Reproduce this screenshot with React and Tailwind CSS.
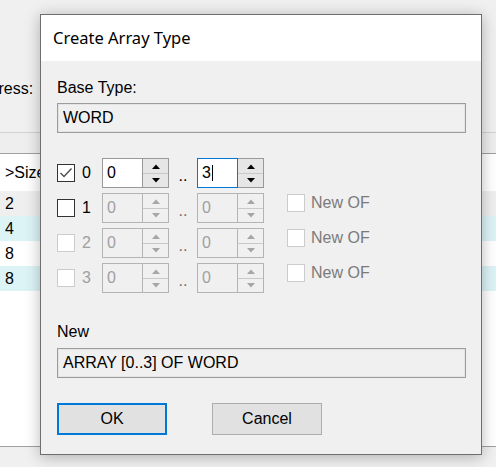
import React from 'react';

const Check = ({ checked, disabled }) => (
  <div
    className={`flex h-[18px] w-[18px] shrink-0 items-center justify-center border bg-white ${
      disabled ? 'border-[#cccccc]' : 'border-[#333333]'
    }`}
  >
    {checked && (
      <svg width="16" height="16" viewBox="0 0 16 16">
        <path d="M2.5 8 L6 11.5 L13.5 3.5" fill="none" stroke="#4d4d4d" strokeWidth="1.4" />
      </svg>
    )}
  </div>
);

const Arrow = ({ up, color }) => (
  <svg width="8" height="5" viewBox="0 0 8 5">
    <polygon points={up ? '0,5 4,0.5 8,5' : '0,0 8,0 4,4.5'} fill={color} />
  </svg>
);

const Spin = ({ value, disabled, focused }) => {
  const arrow = disabled ? '#a6a6a6' : '#000000';
  return (
    <div className="flex h-[30px]">
      <div
        className={`flex w-[41px] items-center border pl-[4px] ${
          focused ? 'border-[#0078d7]' : disabled ? 'border-[#b4b4b4]' : 'border-[#999999]'
        } ${disabled ? 'bg-[#f0f0f0] text-[#a0a0a0]' : 'bg-white'}`}
      >
        {value}
        {focused && <span className="ml-[1px] h-[16px] w-[1px] bg-black" />}
      </div>
      <div
        className={`flex w-[26px] flex-col border border-l-0 ${
          disabled ? 'border-[#b4b4b4] bg-[#f0f0f0]' : 'border-[#999999] bg-[#e6e6e6]'
        }`}
      >
        <div className="flex flex-1 items-center justify-center border-b border-[#c9c9c9] pt-[1px]">
          <Arrow up color={arrow} />
        </div>
        <div className="flex flex-1 items-center justify-center">
          <Arrow color={arrow} />
        </div>
      </div>
    </div>
  );
};

const Field = ({ children }) => (
  <div className="flex h-[30px] w-full items-center border border-[#9c9c9c] bg-[#f0f0f0] pl-[5px] shadow-[inset_0_0_0_1px_#e4e4e4]">
    {children}
  </div>
);

const rows = [
  { n: '0', checked: true, boxDisabled: false, spinDisabled: false, hi: '3', newOf: false },
  { n: '1', checked: false, boxDisabled: false, spinDisabled: true, hi: '0', newOf: true },
  { n: '2', checked: false, boxDisabled: true, spinDisabled: true, hi: '0', newOf: true },
  { n: '3', checked: false, boxDisabled: true, spinDisabled: true, hi: '0', newOf: true },
];

const tableRows = [
  { v: '2', bg: 'bg-[#efefef]' },
  { v: '4', bg: 'bg-[#ddf4f7]' },
  { v: '8', bg: 'bg-white' },
  { v: '8', bg: 'bg-[#ddf4f7]' },
];

export default function App() {
  return (
    <div className="relative h-[467px] w-[496px] overflow-hidden bg-[#f0f0f0] font-['Liberation_Sans',Arial,sans-serif] text-[16px] leading-[18px] text-black">
      {/* window behind the dialog */}
      <div className="flex h-full flex-col">
        <div className="h-[133px] border-b border-[#d2d2d2] pt-[80px]">
          <div className="ml-[-30px]">Address:</div>
        </div>
        <div className="h-[20px] bg-[#eeeeee]" />
        <div className="flex-1 border-t border-[#a0a0a0] bg-white">
          <div className="flex h-[37px] items-center pl-[5px]">&gt;Size</div>
          {tableRows.map((r, i) => (
            <div key={i} className={`flex h-[25px] items-center pl-[5px] ${r.bg}`}>
              {r.v}
            </div>
          ))}
        </div>
        <div className="h-[21px] border-t border-[#a0a0a0]" />
      </div>

      {/* dialog */}
      <div className="absolute left-[40px] top-[14px] flex h-[441px] w-[442px] flex-col border border-[#6e6e6e] bg-[#f0f0f0] shadow-[0_2px_14px_rgba(0,0,0,0.28)]">
        <div className="flex h-[46px] items-center bg-white pl-[12px] font-['Noto_Sans',sans-serif] text-[16.5px]">
          Create Array Type
        </div>
        <div className="flex flex-col pl-[16px] pr-[15px]">
          <div className="mt-[18px]">Base Type:</div>
          <div className="mt-[6px]">
            <Field>WORD</Field>
          </div>

          <div className="mt-[25px] flex flex-col gap-[5px]">
            {rows.map((r) => (
              <div key={r.n} className="flex h-[30px]">
                <div className="flex items-center">
                  <Check checked={r.checked} disabled={r.boxDisabled} />
                  <span className={`ml-[7px] w-[20px] ${r.boxDisabled ? 'text-[#a0a0a0]' : ''}`}>{r.n}</span>
                </div>
                <Spin value="0" disabled={r.spinDisabled} />
                <div
                  className={`flex w-[28px] items-end justify-center pb-[3px] ${
                    r.spinDisabled ? 'text-[#6d6d6d]' : ''
                  }`}
                >
                  ..
                </div>
                <Spin value={r.hi} disabled={r.spinDisabled} focused={r.n === '0'} />
                {r.newOf && (
                  <div className="ml-[23px] flex items-start pt-[1px] text-[#7a7a7a]">
                    <Check disabled />
                    <span className="ml-[6px]">New OF</span>
                  </div>
                )}
              </div>
            ))}
          </div>

          <div className="mt-[30px]">New</div>
          <div className="mt-[7px]">
            <Field>ARRAY [0..3] OF WORD</Field>
          </div>

          <div className="mt-[25px] flex gap-[45px]">
            <button className="flex h-[32px] w-[110px] items-center justify-center border-2 border-[#0078d7] bg-[#e1e1e1]">
              OK
            </button>
            <button className="flex h-[32px] w-[110px] items-center justify-center border border-[#adadad] bg-[#e1e1e1]">
              Cancel
            </button>
          </div>
        </div>
      </div>
    </div>
  );
}
